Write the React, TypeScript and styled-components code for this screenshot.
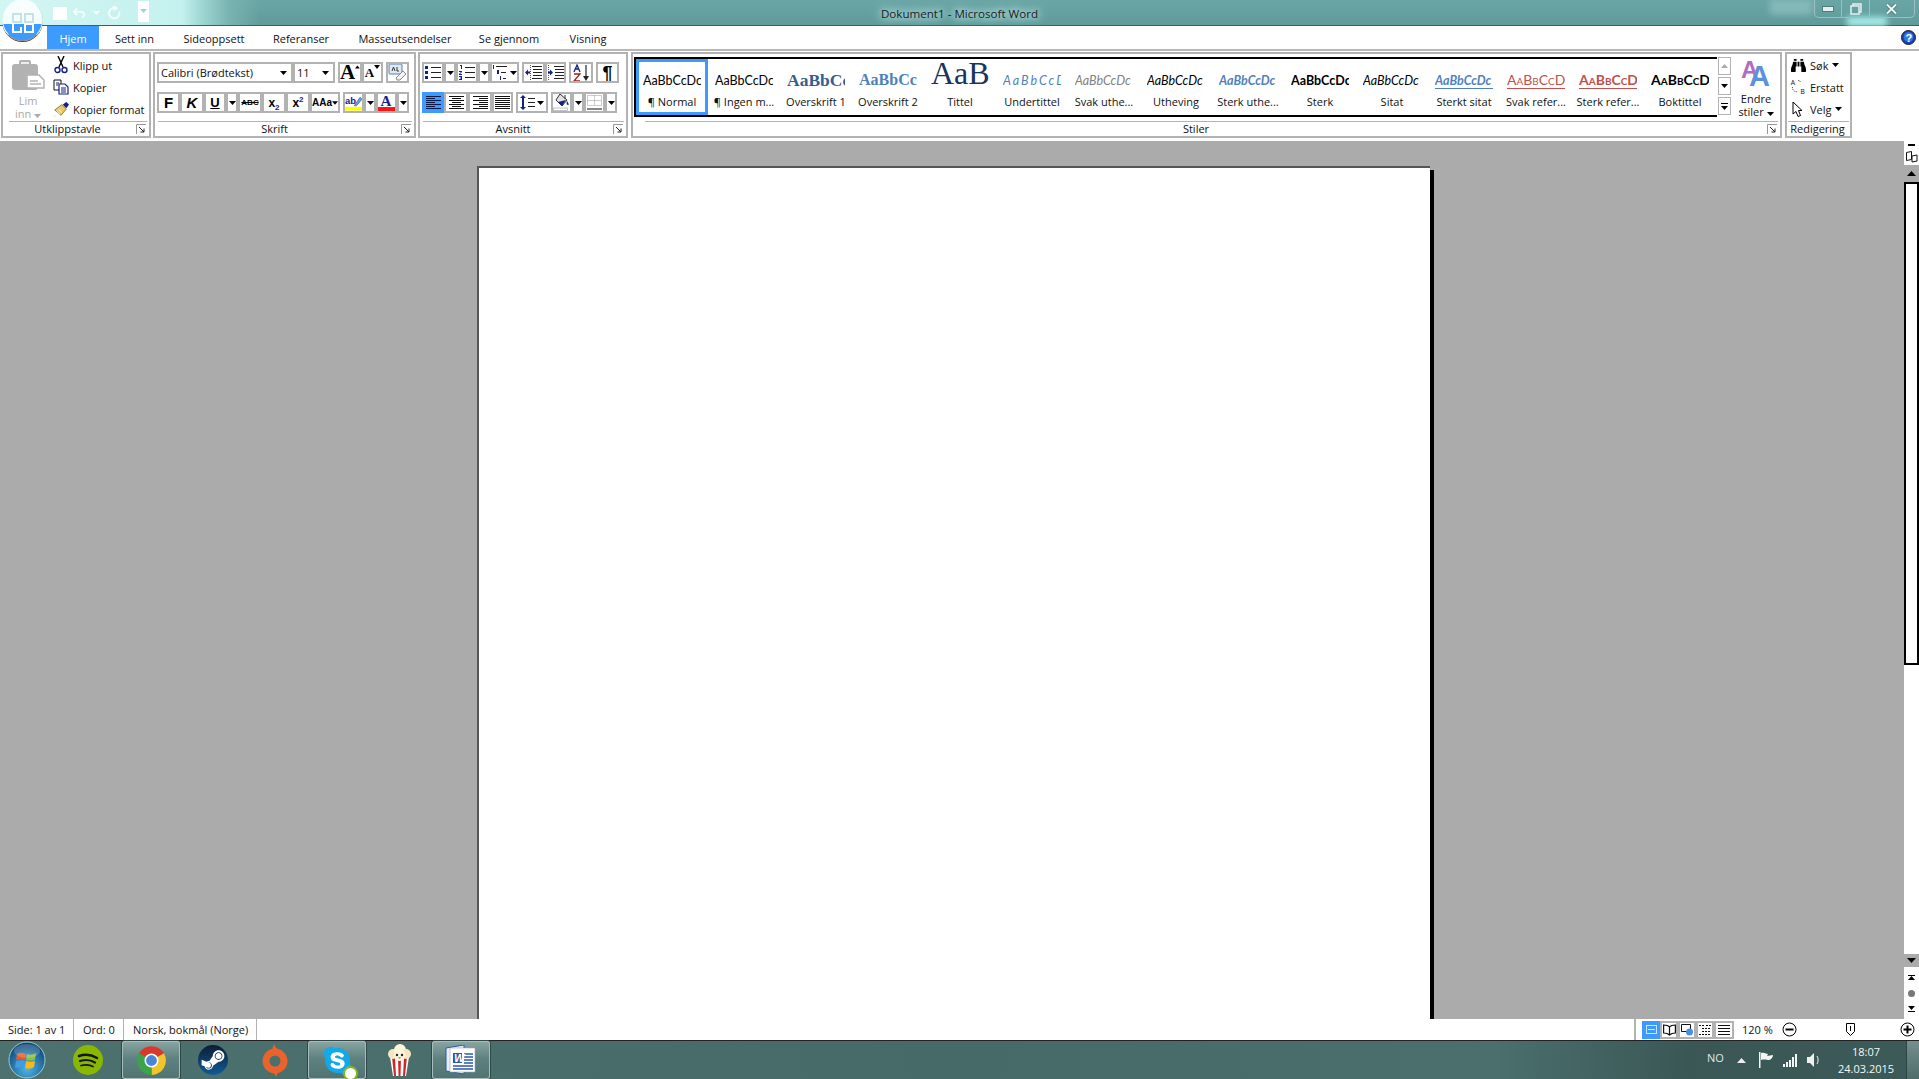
import React from "react";
import styled, { createGlobalStyle } from "styled-components";
import { FaBinoculars, FaSkype, FaSteamSymbol } from "react-icons/fa";

const Global = createGlobalStyle`
  html, body { margin: 0; padding: 0; background: #ababab; overflow: hidden; }
  * { box-sizing: border-box; }
  body { font-family: "Open Sans", "Liberation Sans", sans-serif; font-size: 11px; color: #111; }
`;

const Line = "#b2b2b2";
const Blue = "#3d9bff";
const Navy = "#14208a";

const Shell = styled.div`
  width: 1919px; height: 1079px; display: flex; flex-direction: column; overflow: hidden; position: relative;
`;
const TitleBar = styled.header`
  height: 26px; flex: none; position: relative; display: flex; align-items: center; justify-content: center;
  background: linear-gradient(#6ba6a6, #5f9b9b); border-bottom: 1px solid #3f5f5f;
`;
const Glass = styled.div`
  position: absolute; left: 0; top: 0; width: 260px; height: 25px;
  background: linear-gradient(90deg, #d2f6f3 0%, #c4f1ee 70%, #a5dcd9 76%, #79b4b2 88%, rgba(100,160,160,0) 100%);
`;
const GlassSpot = styled.div<{ $r: number; $t: number; $w: number; $h: number; $c: string }>`
  position: absolute; right: ${p => p.$r}px; top: ${p => p.$t}px; width: ${p => p.$w}px; height: ${p => p.$h}px;
  background: ${p => p.$c}; filter: blur(3px);
`;
const TitleText = styled.div`
  font-size: 11.6px; color: #1c1c1c; margin-top: 2px;
  text-shadow: 0 0 6px #c8eeee, 0 0 10px #c8eeee, 0 0 14px #b8e4e4;
`;
const Qat = styled.div`
  position: absolute; left: 53px; top: 0; height: 25px; width: 100px; display: flex; align-items: center;
`;
const QatSquare = styled.div`width: 14px; height: 13px; background: #fff; margin-top: 1px;`;
const QatMenu = styled.div`
  width: 11px; height: 21px; background: #fff; margin-left: 10px; margin-top: -3px; display: flex; justify-content: center; align-items: center; flex: none;
`;
const OfficeOrb = styled.div`
  position: absolute; left: 2px; top: -1px; width: 41px; height: 42px; border-radius: 50%; z-index: 3;
  background: linear-gradient(#fafefe 0, #f2fdfd 60%, ${Blue} 61%, ${Blue} 100%);
  border: 1px solid #8a8a8a; border-top-color: #e8ffff; border-left-color: #dffafa; border-right-color: #cfeeee;
  box-shadow: 0 1px 0 #444;
  display: flex; align-items: center; justify-content: center; padding-top: 5px;
`;
const WinCtrls = styled.div`
  position: absolute; right: 4px; top: 0; height: 18px; width: 101px; display: flex;
  border: 1px solid #9ac0c0; border-top: 0; border-radius: 0 0 5px 5px;
`;
const WinBtn = styled.div<{ $w: number; $last?: boolean }>`
  width: ${p => p.$w}px; display: flex; align-items: center; justify-content: center;
  border-right: ${p => (p.$last ? "0" : "1px solid #9ac0c0")};
`;

const TabsBar = styled.nav`
  height: 25px; flex: none; background: #fff; display: flex; align-items: stretch; padding-left: 47px; position: relative;
  border-bottom: 2px solid #b8b8b8;
`;
const Tab = styled.div<{ $active?: boolean; $w: number }>`
  width: ${p => p.$w}px; display: flex; align-items: center; justify-content: center; font-size: 11px; padding-top: 1px;
  background: ${p => (p.$active ? Blue : "transparent")}; color: ${p => (p.$active ? "#fff" : "#111")};
`;
const HelpSlot = styled.div`margin-left: auto; margin-right: 3px; display: flex; align-items: center;`;

const Ribbon = styled.section`
  height: 90px; flex: none; background: #fff; display: flex; padding: 1px 0 3px 1px;
`;
const Group = styled.div<{ $w: number; $ml?: number }>`
  width: ${p => p.$w}px; margin-left: ${p => p.$ml ?? 0}px; flex: none; border: 2px solid ${Line}; display: flex; flex-direction: column;
`;
const GroupBody = styled.div`flex: 1; min-height: 0; display: flex;`;
const Footer = styled.footer<{ $ml: number; $mr?: number }>`
  height: 15px; flex: none; margin: 0 ${p => p.$mr ?? 2}px 0 ${p => p.$ml}px; border-top: 1px solid ${Line}; display: flex; align-items: center;
`;
const FooterLabel = styled.div<{ $pr?: number }>`
  flex: 1; text-align: center; font-size: 11px; line-height: 14px; padding-right: ${p => p.$pr ?? 0}px;
`;

const PasteCol = styled.div`width: 50px; flex: none; display: flex; flex-direction: column; align-items: center; padding: 6px 0 0 0; color: #a9a9a9; line-height: 13px; text-align: center;`;
const PasteText = styled.div`margin-top: 4px;`;
const ClipCol = styled.div`display: flex; flex-direction: column; padding-top: 0;`;
const ClipRow = styled.div<{ $pl?: number }>`height: 22px; display: flex; align-items: center; gap: 4px; white-space: nowrap; padding-left: ${p => p.$pl ?? 0}px;`;
const IconBox = styled.span<{ $w?: number; $end?: boolean }>`width: ${p => p.$w ?? 16}px; flex: none; display: inline-flex; align-items: center; justify-content: ${p => (p.$end ? "flex-end" : "center")};`;

const ToolsCol = styled.div`display: flex; flex-direction: column; gap: 9px; padding: 8px 0 0 2px;`;
const ToolRow = styled.div`display: flex; gap: 3px; height: 21px;`;
const Cluster = styled.div`display: flex; gap: 0;`;
const Btn = styled.div<{ $w: number; $on?: boolean; $start?: boolean }>`
  width: ${p => p.$w}px; height: 21px; flex: none; border: 2px solid ${p => (p.$on ? Blue : Line)};
  background: ${p => (p.$on ? Blue : "#fff")}; display: flex; align-items: center;
  justify-content: ${p => (p.$start ? "space-between" : "center")}; padding: ${p => (p.$start ? "0 4px 0 2px" : "0")};
  font-size: 11px; white-space: nowrap; overflow: hidden;
`;
const Glyph = styled.span<{ $size?: number; $family?: string; $italic?: boolean; $under?: boolean; $strike?: boolean }>`
  font-family: ${p => p.$family ?? '"Liberation Sans", sans-serif'}; font-weight: 700; font-size: ${p => p.$size ?? 12}px; line-height: 1;
  font-style: ${p => (p.$italic ? "italic" : "normal")};
  text-decoration: ${p => (p.$under ? "underline" : p.$strike ? "line-through" : "none")}; color: #000;
  sub, sup { font-size: 8px; line-height: 0; color: ${Navy}; }
`;

const Gallery = styled.div`
  margin: 3px 0 0 1px; width: 1083px; height: 60px; display: flex; border: 2px solid #000; border-right: 0; flex: none; align-items: center;
`;
const StyleItem = styled.div<{ $sel?: boolean }>`
  width: 72px; height: 56px; flex: none; display: flex; flex-direction: column; align-items: center;
  border: 3px solid ${p => (p.$sel ? Blue : "transparent")};
`;
const PreviewBox = styled.div`height: 29px; width: 58px; display: flex; align-items: flex-end; justify-content: center; overflow: hidden; flex: none; padding-bottom: 2px;`;
const Preview = styled.div<{ $c?: string; $f?: string; $s?: number; $b?: boolean; $i?: boolean; $sc?: boolean; $line?: boolean; $ls?: number; $dy?: number }>`
  width: 58px; overflow: hidden; white-space: nowrap; line-height: 1.15; color: ${p => p.$c ?? "#000"}; flex: none;
  font-family: ${p => p.$f ?? 'Lato, "Open Sans", sans-serif'}; font-size: ${p => p.$s ?? 12.5}px;
  font-weight: ${p => (p.$b ? 700 : 400)}; font-style: ${p => (p.$i ? "italic" : "normal")};
  font-variant: ${p => (p.$sc ? "small-caps" : "normal")}; letter-spacing: ${p => p.$ls ?? 0}px;
  border-bottom: 1px solid ${p => (p.$line ? p.$c ?? "#000" : "transparent")};
  margin-bottom: ${p => -(p.$dy ?? 0)}px;
`;
const StyleLabel = styled.div`font-size: 11px; margin-top: 4px; line-height: 14px; white-space: nowrap;`;
const ScrollCol = styled.div`margin: 3px 0 0 1px; width: 13px; display: flex; flex-direction: column; gap: 2px; flex: none;`;
const ScrollBtn = styled.div`height: 18px; border: 1px solid ${Line}; border-bottom-width: 1px; display: flex; align-items: center; justify-content: center;`;
const Endre = styled.div`width: 46px; flex: none; display: flex; flex-direction: column; align-items: center; padding-top: 3px; line-height: 13px; margin-left: 2px; text-align: center;`;
const EndreText = styled.div`margin-top: 5px; white-space: nowrap;`;

const Workspace = styled.main`flex: 1; min-height: 0; background: #ababab; display: flex;`;
const PageArea = styled.div`flex: 1; padding: 25px 0 0 477px; display: flex; overflow: hidden;`;
const Page = styled.div`
  width: 953px; background: #fff; border-top: 2px solid #555; border-left: 2px solid #555; box-shadow: 4px 4px 0 #000;
  height: 1000px; flex: none;
`;
const VScroll = styled.aside`width: 15px; flex: none; display: flex; flex-direction: column;`;
const RulerBox = styled.div`height: 24px; background: #fff; display: flex; flex-direction: column; align-items: center; padding-top: 3px; gap: 5px;`;
const ArrowCell = styled.div<{ $h: number }>`height: ${p => p.$h}px; display: flex; align-items: center; justify-content: center; flex: none;`;
const Track = styled.div`flex: 1; background: #fff;`;
const Thumb = styled.div`height: 483px; background: #fff; border: 2px solid #000; flex: none;`;
const NavBox = styled.div`height: 52px; background: #fff; display: flex; flex-direction: column; align-items: center; justify-content: space-around; padding: 3px 0; flex: none;`;

const StatusBar = styled.footer`height: 22px; flex: none; background: #fff; display: flex; align-items: center; font-size: 11px; border-bottom: 1px solid #222;`;
const StatusCell = styled.div<{ $w: number; $pl: number }>`
  width: ${p => p.$w}px; height: 100%; display: flex; align-items: center; padding-left: ${p => p.$pl}px; border-right: 1px solid ${Line}; white-space: nowrap;
`;
const StatusRight = styled.div`margin-left: auto; display: flex; align-items: center; height: 100%; border-left: 2px solid ${Line}; padding-left: 6px; width: 285px;`;
const ViewBtn = styled.div<{ $on?: boolean; $w?: number }>`
  width: ${p => p.$w ?? 18}px; height: 18px; border: 2px solid ${p => (p.$on ? Blue : Line)}; background: ${p => (p.$on ? Blue : "#fff")};
  display: flex; align-items: center; justify-content: center; flex: none;
`;
const Zoom = styled.div`margin-left: 8px; width: 38px; white-space: nowrap;`;
const SliderPart = styled.div`width: 57px; flex: none; display: flex; justify-content: flex-end;`;

const TaskBar = styled.div`
  height: 38px; flex: none; display: flex; align-items: stretch; color: #e8f0f0;
  background: linear-gradient(90deg, #4c716f 0%, #466a68 50%, #4a6f6d 78%, #3a5755 88%, #3c5a58 100%);
`;
const TaskSlot = styled.div<{ $w: number; $on?: boolean; $ml?: number }>`
  width: ${p => p.$w}px; margin-left: ${p => p.$ml ?? 0}px; flex: none; display: flex; align-items: center; justify-content: center; border-radius: 3px;
  ${p => p.$on ? `background: linear-gradient(180deg, #8aa6a4 0%, #5f8280 45%, #4f7472 100%); box-shadow: inset 0 0 0 1px #a7bdbc, 0 0 0 1px #2f4745;` : ""}
`;
const Tray = styled.div`margin-left: auto; display: flex; align-items: center; height: 100%;`;
const Lang = styled.div`width: 30px; padding-left: 9px; font-size: 11px; color: #dfe8e8; margin-top: -5px;`;
const TrayIcon = styled.span<{ $w: number }>`width: ${p => p.$w}px; display: inline-flex; justify-content: center; flex: none;`;
const Clock = styled.div`width: 80px; text-align: center; font-size: 11px; line-height: 17px; color: #f4f8f8;`;
const ShowDesk = styled.div`width: 13px; background: linear-gradient(#74908e, #4f6c6a); border-left: 1px solid #2c4442; height: 100%;`;

const Caret = ({ c = "#000" }: { c?: string }) => (
  <svg width="7" height="4" viewBox="0 0 7 4"><path d="M0 0h7L3.5 4z" fill={c} /></svg>
);
const Launcher = () => (
  <svg width="11" height="11" viewBox="0 0 11 11" fill="none" stroke="#222"><path d="M.5 10V.5H10" stroke="#999" /><path d="M3 3l5 5M8 4.5V8H4.5" /></svg>
);
const Scissors = () => (
  <svg width="14" height="18" viewBox="0 0 14 18" fill="none" stroke={Navy} strokeWidth="1.4"><path d="M4 0l5 11M10 0L5 11" stroke="#000" /><circle cx="3.5" cy="14" r="2.5" /><circle cx="10.5" cy="14" r="2.5" /></svg>
);
const CopyIco = () => (
  <svg width="16" height="16" viewBox="0 0 16 16" fill="#fff" stroke="#111"><path d="M1 1h7v10H1z" /><path d="M6 5h6l3 3v7H6z" stroke={Navy} strokeWidth="1.2" /><path d="M3 4h3M3 6h2M8 9h5M8 11h5M8 13h5" stroke={Navy} /></svg>
);
const BrushIco = () => (
  <svg width="18" height="17" viewBox="0 0 18 17"><path d="M11 3l4-3 3 3-3 4z" fill={Navy} /><path d="M2 9l8-6 5 5-6 7z" fill="#e8c86a" stroke="#6b5a1a" strokeWidth=".8" /><path d="M4 10l4 4M6 8l4 4" stroke="#fff" /><path d="M0 16h4" stroke="#e6e600" strokeDasharray="1 1" /></svg>
);
const PasteIco = () => (
  <svg width="33" height="30" viewBox="0 0 33 30"><rect x="0" y="4" width="26" height="26" rx="3" fill="#b2b2b2" /><rect x="7" y="0" width="12" height="7" rx="2" fill="#b2b2b2" /><path d="M9 3h8" stroke="#fff" strokeWidth="1.5" /><path d="M15 15h12l5 5v8H15z" fill="#fff" stroke="#b2b2b2" strokeWidth="1.5" /><path d="M18 21h8M18 24h11" stroke="#b2b2b2" strokeWidth="1.5" /></svg>
);
const ABig = ({ size, up }: { size: number; up?: boolean }) => (
  <>
    <Glyph $size={size} $family='"Liberation Serif", serif'>A</Glyph>
    <svg width="6" height="4" viewBox="0 0 6 4" style={{ alignSelf: "flex-start", marginTop: 1 }}><path d={up ? "M0 4h6L3 0z" : "M0 0h6L3 4z"} /></svg>
  </>
);
const ClearIco = () => (
  <svg width="19" height="17" viewBox="0 0 19 17"><rect x="1" y="0" width="13" height="10" rx="1" fill="#dfe8f5" stroke="#5f7aa5" /><path d="M8 14l7-7 3 3-6 6H9z" fill="#f2f2f2" stroke="#888" /><path d="M4 7l1.5-4L7 7M9 3v4h2" stroke="#333" fill="none" /></svg>
);
const BulletsIco = () => (
  <svg width="16" height="15" viewBox="0 0 16 15" fill={Navy}><rect y="1" width="3" height="3" /><rect y="6" width="3" height="3" /><rect y="11" width="3" height="3" /><path d="M6 2h10v1H6zM6 7h10v1H6zM6 12h10v1H6z" fill="#222" /></svg>
);
const NumIco = () => (
  <svg width="16" height="15" viewBox="0 0 16 15" fill={Navy}><path d="M1 0h2v4H2V1H1zM0 6h3v1L1 9h2v1H0V9l2-2H0zM0 11h3v4H0v-1h2v-.5H1v-1h1V12H0z" /><path d="M6 2h10v1H6zM6 7h10v1H6zM6 12h10v1H6z" fill="#222" /></svg>
);
const MultiIco = () => (
  <svg width="15" height="15" viewBox="0 0 15 15" fill={Navy}><path d="M1 0h1v4H1zM5 5h2v4H5zM8 11h1v4H8z" /><path d="M4 1h11v1H4zM9 7h5v1H9zM11 13h3v1h-3z" fill="#222" /></svg>
);
const IndentIco = ({ out }: { out?: boolean }) => (
  <svg width="17" height="15" viewBox="0 0 17 15"><path d="M7 1h10v1H7zM8 4h9v1H8zM8 7h9v1H8zM8 10h9v1H8zM7 13h10v1H7z" fill="#222" /><path d={out ? "M0 7.5l3-3v2h2v2H3v2z" : "M6 7.5l-3-3v2H1v2h2v2z"} fill={Navy} /><path d="M5.5 0v15" stroke="#555" strokeDasharray="1 1" transform={out ? "" : "translate(-4 0)"} /></svg>
);
const SortIco = () => (
  <svg width="17" height="18" viewBox="0 0 17 18" fill="none"><path d="M1 8l3-7 3 7M2 5h4" stroke={Navy} strokeWidth="1.3" /><path d="M1 10h6L1 17h6" stroke="#a02020" strokeWidth="1.3" /><path d="M13 1v14" stroke="#222" strokeWidth="1.2" /><path d="M10 12h6l-3 5z" fill="#222" /></svg>
);
const AlignIco = ({ widths, dir, c = "#111" }: { widths: number[]; dir: "l" | "c" | "r"; c?: string }) => (
  <svg width="15" height="13" viewBox="0 0 15 13">
    {widths.map((w, i) => (
      <rect key={i} x={dir === "l" ? 0 : dir === "r" ? 15 - w : (15 - w) / 2} y={i * 2} width={w} height="1" fill={c} />
    ))}
  </svg>
);
const SpacingIco = () => (
  <svg width="15" height="15" viewBox="0 0 15 15"><path d="M3 0l3 3H4v9h2l-3 3-3-3h2V3H0z" fill={Navy} /><path d="M8 3h7v1H8zM8 7h7v1H8zM8 11h7v1H8z" fill="#222" /></svg>
);
const FillIco = () => (
  <svg width="17" height="17" viewBox="0 0 17 17"><path d="M7 0l7 6-5 6-6-6z" fill="#e2e2e2" stroke="#333" /><path d="M12 1v4" stroke="#333" /><path d="M5 8l8-2-4 6z" fill={Navy} /><path d="M14 7c2 3 2 4 1 4s-2-1-1-4z" fill={Navy} /><rect x=".5" y="14" width="14" height="2.5" fill="#fff" stroke="#aaa" strokeWidth=".7" /></svg>
);
const BorderIco = () => (
  <svg width="15" height="15" viewBox="0 0 15 15" fill="none"><path d="M.5.5h14v10H.5zM7.5.5v10M.5 5.5h14" stroke="#999" strokeDasharray="1 1" /><path d="M0 14h15" stroke="#111" /></svg>
);
const HighlightIco = () => (
  <svg width="18" height="18" viewBox="0 0 18 18"><text x="0" y="10" fontSize="10" fontWeight="700" fontFamily="Liberation Sans" fill={Navy}>ab</text><path d="M11 10l5-7 2 2-6 7-2 0z" fill="#6aa4e8" stroke="#2a4a88" strokeWidth=".7" /><rect y="13" width="18" height="4" fill="#ffff00" /></svg>
);
const FontColorIco = () => (
  <svg width="17" height="18" viewBox="0 0 17 18"><text x="2.5" y="12" fontSize="15" fontWeight="700" fontFamily="Liberation Serif" fill={Navy}>A</text><rect y="13" width="17" height="4" fill="#ff1414" /></svg>
);
const SelectIco = () => (
  <svg width="12" height="17" viewBox="0 0 12 17"><path d="M1 1v12l3-2.5 2 5 2.5-1-2-5H10z" fill="#fff" stroke="#000" /></svg>
);
const ReplaceIco = () => (
  <svg width="20" height="20" viewBox="0 0 20 20" fill="none"><text x="1" y="7" fontSize="8" fill="#111" fontFamily="Liberation Sans">A</text><text x="13" y="19" fontSize="8" fill="#111" fontFamily="Liberation Sans">B</text><path d="M10 2c3 0 3 1 3 3M3 10c0 5 3 6 7 6" stroke="#222" strokeDasharray="1.3 1.3" /></svg>
);
const EndreIco = () => (
  <svg width="31" height="30" viewBox="0 0 31 30"><text x="0" y="21" fontSize="24" fontWeight="700" fontFamily="Liberation Sans" fill="#b26cc6">A</text><text x="8" y="29" fontSize="29" fontWeight="700" fontFamily="Liberation Sans" fill="#5b92d8">A</text></svg>
);
const PageViewIco = () => (
  <svg width="11" height="9" viewBox="0 0 11 9" fill="none" stroke="#fff" opacity=".75"><rect x=".5" y=".5" width="10" height="8" /><path d="M2 4.5h7" /></svg>
);
const BookIco = () => (
  <svg width="13" height="12" viewBox="0 0 13 12" fill="none" stroke="#111" strokeWidth="1.2"><path d="M6.5 3C5 1 2 1 .6 1v8c2 0 4 0 5.9 2 2-2 4-2 5.9-2V1C11 1 8 1 6.5 3zM6.5 3v8" /></svg>
);
const WebIco = () => (
  <svg width="13" height="12" viewBox="0 0 13 12" fill="none"><path d="M.5.5h9v7H.5z" stroke="#111" /><circle cx="8.5" cy="8" r="3.5" fill="#4b8fe0" /></svg>
);
const OutlineIco = () => (
  <svg width="12" height="10" viewBox="0 0 12 10" fill="none" stroke="#111"><path d="M0 .5h5M7 .5h5M3 3.5h9M3 6.5h9M0 9.5h12" strokeDasharray="2 1" /></svg>
);
const DraftIco = () => (
  <svg width="12" height="10" viewBox="0 0 12 10" fill="none" stroke="#111"><path d="M0 .5h12M0 3.5h12M0 6.5h12M0 9.5h12" /></svg>
);
const CircleSign = ({ plus }: { plus?: boolean }) => (
  <svg width="15" height="15" viewBox="0 0 15 15" fill="none" stroke="#000"><circle cx="7.5" cy="7.5" r="6.5" /><path d="M3.5 7.5h8" strokeWidth="2" />{plus && <path d="M7.5 3.5v8" strokeWidth="2" />}</svg>
);
const SliderThumb = () => (
  <svg width="9" height="13" viewBox="0 0 9 13" fill="#fff" stroke="#000"><path d="M.5.5h8v8l-4 4-4-4z" /><path d="M4.5 3v5" /></svg>
);
const OfficeMark = () => (
  <svg width="22" height="20" viewBox="0 0 22 20" fill="none" strokeWidth="2">
    <defs>
      <linearGradient id="markStroke" gradientUnits="userSpaceOnUse" x1="0" y1="0" x2="0" y2="20">
        <stop offset="0" stopColor="#c4e2e2" /><stop offset=".48" stopColor="#c4e2e2" /><stop offset=".5" stopColor="#fff" /><stop offset="1" stopColor="#fff" />
      </linearGradient>
    </defs>
    <path d="M1 9h8V1H1zM13 1h8v8h-8zM1 11v8h8v-5M13 19h8v-8h-8z" stroke="url(#markStroke)" />
  </svg>
);
const HelpIco = () => (
  <svg width="15" height="15" viewBox="0 0 15 15"><circle cx="7.5" cy="7.5" r="7" fill="#1a3fb8" stroke="#222" /><circle cx="7.5" cy="7" r="4.8" fill="#2f7ae8" /><text x="4.5" y="11.5" fontSize="11" fontWeight="700" fontFamily="Liberation Sans" fill="#fff">?</text></svg>
);
const UndoIco = () => (
  <svg width="14" height="12" viewBox="0 0 17 13" fill="none" stroke="#fff" strokeWidth="2" opacity=".85"><path d="M5 1L1 5l4 4M1 5h9c4 0 5 5 1 7" /></svg>
);
const RepeatIco = () => (
  <svg width="14" height="14" viewBox="0 0 16 16" fill="none" stroke="#fff" strokeWidth="2" opacity=".9"><path d="M10 2.5a6 6 0 1 0 4 4" /><path d="M7 0l4 2.5L8 5" /></svg>
);
const WinOrb = () => (
  <svg width="38" height="38" viewBox="0 0 38 38">
    <defs>
      <radialGradient id="orb" cx="50%" cy="75%" r="70%"><stop offset="0" stopColor="#4db5e8" /><stop offset="1" stopColor="#0e4678" /></radialGradient>
    </defs>
    <circle cx="19" cy="19" r="18" fill="url(#orb)" stroke="#9cc" strokeWidth="1" />
    <path d="M9 13c3-2 6-1 9 0l-1 6c-3-1-6-1-9 0z" fill="#e85a24" />
    <path d="M19 13c3 1 6 1 9-1l-1 7c-3 1-6 1-9 0z" fill="#8dc040" />
    <path d="M8 20c3-1 6-1 9 0l-1 7c-3-1-6-1-9 0z" fill="#3f9ce0" />
    <path d="M18 20c3 1 6 1 9 0l-1 6c-3 2-6 2-9 1z" fill="#f5b81e" />
    <ellipse cx="19" cy="10" rx="13" ry="7" fill="#fff" opacity=".18" />
  </svg>
);
const SpotifyIco = () => (
  <svg width="30" height="30" viewBox="0 0 30 30" fill="none"><circle cx="15" cy="15" r="15" fill="#8ab800" /><path d="M6 11c6-2 13-1 18 2" stroke="#15170a" strokeWidth="2.6" strokeLinecap="round" /><path d="M7 16c5-1.5 11-1 15 1.5" stroke="#15170a" strokeWidth="2.2" strokeLinecap="round" /><path d="M8 20.5c4-1 9-.8 12 1" stroke="#15170a" strokeWidth="1.8" strokeLinecap="round" /></svg>
);
const ChromeIco = () => (
  <svg width="29" height="29" viewBox="0 0 29 29">
    <path d="M14.5 14.5L2 7.3A14.5 14.5 0 0 1 27 7.3z" fill="#d8392c" />
    <path d="M14.5 14.5L27 7.3A14.5 14.5 0 0 1 14.5 29z" fill="#f2c42c" />
    <path d="M14.5 14.5V29A14.5 14.5 0 0 1 2 7.3z" fill="#3da34a" />
    <circle cx="14.5" cy="14.5" r="7" fill="#fff" /><circle cx="14.5" cy="14.5" r="5.4" fill="#4a86d8" />
  </svg>
);
const SteamRound = styled.div`
  width: 30px; height: 30px; border-radius: 50%; background: linear-gradient(#0e1c34, #0e5c96); color: #fff; display: flex; align-items: center; justify-content: center; font-size: 26px;
`;
const OriginIco = () => (
  <svg width="26" height="35" viewBox="0 0 26 35" fill="none"><circle cx="13" cy="18" r="9" stroke="#e8642c" strokeWidth="7" /><path d="M12 1c1 3 3 5 5 6l-7 2c0-3 1-6 2-8zM14 34c-1-3-3-5-5-6l7-2c0 3-1 6-2 8z" fill="#e8642c" /></svg>
);
const SkypeWrap = styled.div`
  color: #12a9ea; font-size: 31px; display: flex; position: relative;
  background: radial-gradient(circle, #fff 48%, transparent 52%);
`;
const SkypeStatus = styled.span`position: absolute; right: -5px; bottom: -5px; width: 15px; height: 15px; background: #fff; border-radius: 50%; border: 2px solid #86b817;`;
const PopcornIco = () => (
  <svg width="25" height="32" viewBox="0 0 25 32">
    <path d="M3 13h19l-3 19H6z" fill="#fff" />
    <path d="M5 13h3l1 19H7zM11 13h3l-.5 19h-2zM17 13h3l-2 19h-2z" fill="#cc2a2a" />
    <circle cx="6" cy="10" r="5" fill="#f5e6c0" /><circle cx="13" cy="6" r="6" fill="#fff5dd" /><circle cx="19" cy="10" r="5" fill="#f5e6c0" /><circle cx="12.5" cy="11" r="6" fill="#fff5dd" />
    <circle cx="10" cy="11" r="1.2" fill="#222" /><circle cx="15" cy="11" r="1.2" fill="#222" /><path d="M11 13.5c1 1.2 2 1.2 3 0z" fill="#c22" />
  </svg>
);
const WordIco = () => (
  <svg width="32" height="30" viewBox="0 0 32 30">
    <path d="M1 3l18-3v29l-18-3z" fill="#e6eefa" stroke="#2a5aa8" />
    <path d="M5 3h25v24H5z" fill="#fff" stroke="#9ab" strokeWidth=".6" />
    <path d="M8 8h9v10H8z" fill="#2a5aa8" />
    <path d="M19 9h9M19 12h9M19 15h9M19 18h9M8 21h20M8 24h20" stroke="#2a5aa8" strokeWidth="1.6" />
    <text x="9" y="17" fontSize="11" fontWeight="700" fontStyle="italic" fontFamily="Liberation Sans" fill="#fff">W</text>
  </svg>
);
const FlagIco = () => (
  <svg width="15" height="16" viewBox="0 0 15 16" fill="#f4f4f4"><path d="M0 0h1.5v16H0zM2 1c4-1 5 1 7 1l-1 2 6-1c0 2-2 5-4 5-2 0-4-1-8 0z" /></svg>
);
const SignalIco = () => (
  <svg width="15" height="13" viewBox="0 0 15 13" fill="#f4f4f4"><rect y="10" width="2" height="3" /><rect x="3" y="8" width="2" height="5" /><rect x="6" y="6" width="2" height="7" /><rect x="9" y="3" width="2" height="10" /><rect x="12" y="0" width="2" height="13" /></svg>
);
const SpeakerIco = () => (
  <svg width="14" height="14" viewBox="0 0 14 14" fill="#f0f0f0"><path d="M0 4h3l4-4v14l-4-4H0z" /><path d="M10 3c1.5 2 1.5 6 0 8" stroke="#f0f0f0" fill="none" /></svg>
);

const serif = '"Liberation Serif", serif';
const styles = [
  { p: {}, l: "¶ Normal", sel: true },
  { p: {}, l: "¶ Ingen m..." },
  { p: { $c: "#365f91", $f: serif, $s: 17.5, $b: true, $dy: 2 }, l: "Overskrift 1" },
  { p: { $c: "#4f81bd", $f: serif, $s: 16, $b: true, $dy: 1 }, l: "Overskrift 2" },
  { p: { $c: "#17365d", $f: serif, $s: 32, $dy: 4 }, l: "Tittel", t: "AaB" },
  { p: { $c: "#4f81bd", $i: true, $ls: 2 }, l: "Undertittel" },
  { p: { $c: "#808080", $i: true }, l: "Svak uthe..." },
  { p: { $i: true }, l: "Utheving" },
  { p: { $c: "#4f81bd", $i: true, $b: true }, l: "Sterk uthe..." },
  { p: { $b: true }, l: "Sterk" },
  { p: { $i: true }, l: "Sitat" },
  { p: { $c: "#4f81bd", $i: true, $b: true, $line: true }, l: "Sterkt sitat" },
  { p: { $c: "#c0504d", $sc: true, $line: true, $s: 14 }, l: "Svak refer..." },
  { p: { $c: "#c0504d", $sc: true, $b: true, $line: true, $s: 14 }, l: "Sterk refer..." },
  { p: { $sc: true, $b: true, $s: 14 }, l: "Boktittel" },
];
const tabs: [string, number][] = [["Sett inn", 71], ["Sideoppsett", 88], ["Referanser", 86], ["Masseutsendelser", 122], ["Se gjennom", 86], ["Visning", 72]];
const ragged = [15, 9, 15, 9, 15, 9, 15];

export default function App() {
  return (
    <Shell>
      <Global />
      <TitleBar>
        <Glass />
        <GlassSpot $r={32} $t={17} $w={40} $h={9} $c="#a8f0f0" />
        <GlassSpot $r={107} $t={0} $w={42} $h={15} $c="rgba(190,225,225,.35)" />
        <Qat>
          <QatSquare />
          <IconBox $w={26}><UndoIco /></IconBox>
          <Caret c="#fff" />
          <IconBox $w={28}><RepeatIco /></IconBox>
          <QatMenu><Caret c="#aacccc" /></QatMenu>
        </Qat>
        <TitleText>Dokument1 - Microsoft Word</TitleText>
        <WinCtrls>
          <WinBtn $w={28}><svg width="12" height="6" viewBox="0 0 12 6" fill="#e4f0f0" stroke="#557a7a"><rect x=".5" y=".5" width="11" height="5" /></svg></WinBtn>
          <WinBtn $w={28}><svg width="12" height="12" viewBox="0 0 12 12" fill="none" stroke="#e4f0f0" strokeWidth="1.5"><rect x="3" y="1" width="8" height="8" /><rect x="1" y="3" width="8" height="8" fill="#64a0a0" /></svg></WinBtn>
          <WinBtn $w={45} $last><svg width="13" height="12" viewBox="0 0 13 12" fill="none"><path d="M2 1.5l9 9M11 1.5l-9 9" stroke="#4f7474" strokeWidth="3.6" /><path d="M2 1.5l9 9M11 1.5l-9 9" stroke="#eaf6f6" strokeWidth="2" /></svg></WinBtn>
        </WinCtrls>
      </TitleBar>
      <OfficeOrb><OfficeMark /></OfficeOrb>

      <TabsBar>
        <Tab $active $w={52}>Hjem</Tab>
        {tabs.map(([t, w]) => <Tab key={t} $w={w}>{t}</Tab>)}
        <HelpSlot><HelpIco /></HelpSlot>
      </TabsBar>

      <Ribbon>
        <Group $w={150}>
          <GroupBody>
            <PasteCol>
              <PasteIco />
              <PasteText>Lim<br />inn <Caret c="#aaa" /></PasteText>
            </PasteCol>
            <ClipCol>
              <ClipRow><IconBox><Scissors /></IconBox>Klipp ut</ClipRow>
              <ClipRow><IconBox><CopyIco /></IconBox>Kopier</ClipRow>
              <ClipRow><IconBox><BrushIco /></IconBox>Kopier format</ClipRow>
            </ClipCol>
          </GroupBody>
          <Footer $ml={6}><FooterLabel $pr={10}>Utklippstavle</FooterLabel><Launcher /></Footer>
        </Group>

        <Group $w={263} $ml={2}>
          <GroupBody>
            <ToolsCol>
              <ToolRow>
                <Cluster>
                  <Btn $w={136} $start>Calibri (Brødtekst)<Caret /></Btn>
                  <Btn $w={42} $start>11<Caret /></Btn>
                </Cluster>
                <Cluster>
                  <Btn $w={24}><ABig size={21} up /></Btn>
                  <Btn $w={21}><ABig size={13} /></Btn>
                </Cluster>
                <Btn $w={23}><ClearIco /></Btn>
              </ToolRow>
              <ToolRow>
                <Cluster>
                  <Btn $w={23}><Glyph $size={15}>F</Glyph></Btn>
                  <Btn $w={24}><Glyph $size={15} $italic>K</Glyph></Btn>
                  <Btn $w={22}><Glyph $size={13} $under>U</Glyph></Btn>
                  <Btn $w={12}><Caret /></Btn>
                  <Btn $w={24}><Glyph $size={8} $strike>ABC</Glyph></Btn>
                  <Btn $w={24}><Glyph $size={12}>x<sub>2</sub></Glyph></Btn>
                  <Btn $w={24}><Glyph $size={12}>x<sup>2</sup></Glyph></Btn>
                  <Btn $w={30}><Glyph $size={10}>AAa</Glyph><Caret /></Btn>
                </Cluster>
                <Cluster>
                  <Btn $w={21}><HighlightIco /></Btn>
                  <Btn $w={12}><Caret /></Btn>
                  <Btn $w={21}><FontColorIco /></Btn>
                  <Btn $w={12}><Caret /></Btn>
                </Cluster>
              </ToolRow>
            </ToolsCol>
          </GroupBody>
          <Footer $ml={3}><FooterLabel $pr={10}>Skrift</FooterLabel><Launcher /></Footer>
        </Group>

        <Group $w={210} $ml={2}>
          <GroupBody>
            <ToolsCol>
              <ToolRow>
                <Cluster>
                  <Btn $w={22}><BulletsIco /></Btn>
                  <Btn $w={12}><Caret /></Btn>
                  <Btn $w={22}><NumIco /></Btn>
                  <Btn $w={12}><Caret /></Btn>
                  <Btn $w={29}><MultiIco />&nbsp;<Caret /></Btn>
                </Cluster>
                <Cluster>
                  <Btn $w={23}><IndentIco out /></Btn>
                  <Btn $w={21}><IndentIco /></Btn>
                </Cluster>
                <Btn $w={24}><SortIco /></Btn>
                <Btn $w={23}><Glyph $size={18}>¶</Glyph></Btn>
              </ToolRow>
              <ToolRow>
                <Cluster>
                  <Btn $w={22} $on><AlignIco dir="l" c="#0b1a4a" widths={ragged} /></Btn>
                  <Btn $w={24}><AlignIco dir="c" widths={ragged} /></Btn>
                  <Btn $w={24}><AlignIco dir="r" widths={ragged} /></Btn>
                  <Btn $w={21}><AlignIco dir="l" widths={[15, 15, 15, 15, 15, 15, 15]} /></Btn>
                </Cluster>
                <Btn $w={32}><SpacingIco />&nbsp;<Caret /></Btn>
                <Cluster>
                  <Btn $w={21}><FillIco /></Btn>
                  <Btn $w={12}><Caret /></Btn>
                  <Btn $w={21}><BorderIco /></Btn>
                  <Btn $w={12}><Caret /></Btn>
                </Cluster>
              </ToolRow>
            </ToolsCol>
          </GroupBody>
          <Footer $ml={3}><FooterLabel $pr={10}>Avsnitt</FooterLabel><Launcher /></Footer>
        </Group>

        <Group $w={1151} $ml={3}>
          <GroupBody>
            <Gallery>
              {styles.map(s => (
                <StyleItem key={s.l} $sel={s.sel}>
                  <PreviewBox><Preview {...s.p}>{s.t ?? "AaBbCcDc"}</Preview></PreviewBox>
                  <StyleLabel>{s.l}</StyleLabel>
                </StyleItem>
              ))}
            </Gallery>
            <ScrollCol>
              <ScrollBtn><svg width="7" height="4" viewBox="0 0 7 4"><path d="M0 4h7L3.5 0z" fill="#aaa" /></svg></ScrollBtn>
              <ScrollBtn><Caret /></ScrollBtn>
              <ScrollBtn><svg width="7" height="7" viewBox="0 0 7 7"><path d="M0 0h7v1H0zM0 3h7L3.5 7z" /></svg></ScrollBtn>
            </ScrollCol>
            <Endre>
              <EndreIco />
              <EndreText>Endre<br />stiler <Caret /></EndreText>
            </Endre>
          </GroupBody>
          <Footer $ml={12}><FooterLabel $pr={20}>Stiler</FooterLabel><Launcher /></Footer>
        </Group>

        <Group $w={67} $ml={3}>
          <GroupBody>
            <ClipCol>
              <ClipRow $pl={3}><IconBox><FaBinoculars size={15} color="#000" /></IconBox>Søk <Caret /></ClipRow>
              <ClipRow $pl={3}><IconBox><ReplaceIco /></IconBox>Erstatt</ClipRow>
              <ClipRow $pl={3}><IconBox><SelectIco /></IconBox>Velg <Caret /></ClipRow>
            </ClipCol>
          </GroupBody>
          <Footer $ml={1} $mr={1}><FooterLabel $pr={2}>Redigering</FooterLabel></Footer>
        </Group>
      </Ribbon>

      <Workspace>
        <PageArea><Page /></PageArea>
        <VScroll>
          <RulerBox>
            <svg width="7" height="2" viewBox="0 0 7 2"><rect width="7" height="2" /></svg>
            <svg width="12" height="12" viewBox="0 0 12 12" fill="none" stroke="#111"><path d="M.5 1.5l5-1v8l-5 1zM6 5l5-1v6l-5 1z" /></svg>
          </RulerBox>
          <ArrowCell $h={17}><svg width="9" height="5" viewBox="0 0 9 5"><path d="M0 5h9L4.5 0z" /></svg></ArrowCell>
          <Thumb />
          <Track />
          <ArrowCell $h={13}><svg width="9" height="5" viewBox="0 0 9 5"><path d="M0 0h9L4.5 5z" /></svg></ArrowCell>
          <NavBox>
            <svg width="7" height="6" viewBox="0 0 7 6"><path d="M0 0h7v1H0zM0 5l3.5-4L7 5z" /></svg>
            <svg width="7" height="7" viewBox="0 0 7 7"><circle cx="3.5" cy="3.5" r="3.5" fill="#777" /></svg>
            <svg width="7" height="6" viewBox="0 0 7 6"><path d="M0 5h7v1H0zM0 0h7L3.5 4z" /></svg>
          </NavBox>
        </VScroll>
      </Workspace>

      <StatusBar>
        <StatusCell $w={74} $pl={8}>Side: 1 av 1</StatusCell>
        <StatusCell $w={50} $pl={9}>Ord: 0</StatusCell>
        <StatusCell $w={133} $pl={9}>Norsk, bokmål (Norge)</StatusCell>
        <StatusRight>
          <ViewBtn $on><PageViewIco /></ViewBtn>
          <ViewBtn><BookIco /></ViewBtn>
          <ViewBtn><WebIco /></ViewBtn>
          <ViewBtn><OutlineIco /></ViewBtn>
          <ViewBtn $w={20}><DraftIco /></ViewBtn>
          <Zoom>120 %</Zoom>
          <IconBox $w={18}><CircleSign /></IconBox>
          <SliderPart><SliderThumb /></SliderPart>
          <IconBox $w={60} $end><CircleSign plus /></IconBox>
        </StatusRight>
      </StatusBar>

      <TaskBar>
        <TaskSlot $w={54}><WinOrb /></TaskSlot>
        <TaskSlot $w={68}><SpotifyIco /></TaskSlot>
        <TaskSlot $w={58} $on><ChromeIco /></TaskSlot>
        <TaskSlot $w={66}><SteamRound><FaSteamSymbol /></SteamRound></TaskSlot>
        <TaskSlot $w={58}><OriginIco /></TaskSlot>
        <TaskSlot $w={58} $on $ml={4}><SkypeWrap><FaSkype /><SkypeStatus /></SkypeWrap></TaskSlot>
        <TaskSlot $w={66}><PopcornIco /></TaskSlot>
        <TaskSlot $w={58} $on><WordIco /></TaskSlot>
        <Tray>
          <Lang>NO</Lang>
          <TrayIcon $w={26}><svg width="9" height="5" viewBox="0 0 9 5"><path d="M0 5h9L4.5 0z" fill="#eee" /></svg></TrayIcon>
          <TrayIcon $w={24}><FlagIco /></TrayIcon>
          <TrayIcon $w={24}><SignalIco /></TrayIcon>
          <TrayIcon $w={24}><SpeakerIco /></TrayIcon>
          <Clock>18:07<br />24.03.2015</Clock>
          <ShowDesk />
        </Tray>
      </TaskBar>
    </Shell>
  );
}
